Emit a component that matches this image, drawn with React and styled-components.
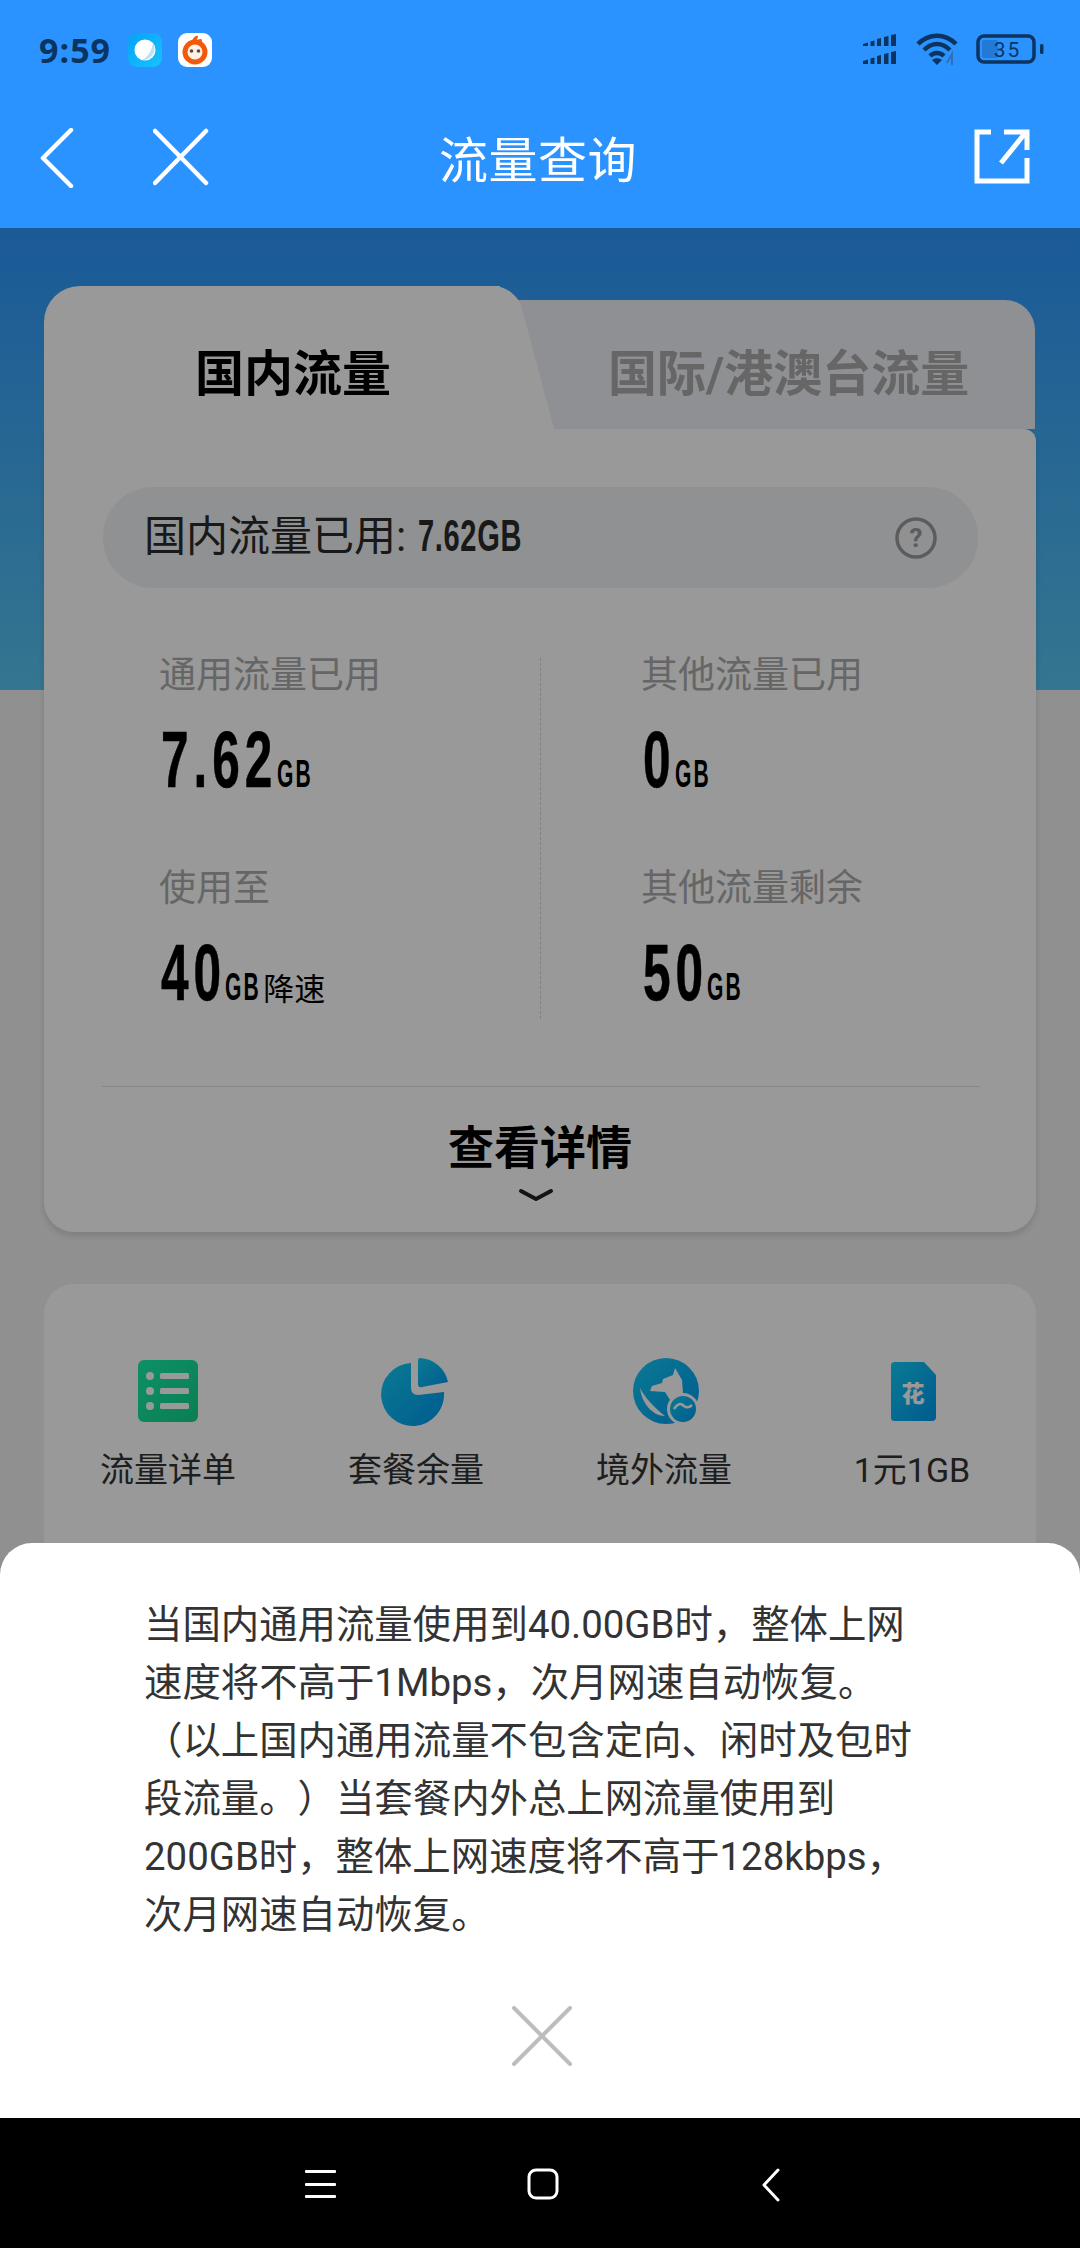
import styled, { createGlobalStyle } from "styled-components";

const GlobalStyle = createGlobalStyle`
    html, body {
        margin: 0;
        padding: 0;
        background: #000;
    }
    * {
        box-sizing: border-box;
    }
`

const cjk = `Roboto, "Noto Sans CJK SC", sans-serif`
const sans = `"Liberation Sans", sans-serif`

const Screen = styled.div`
    width: 1080px;
    height: 2248px;
    display: flex;
    flex-direction: column;
    overflow: hidden;
    font-family: ${cjk};
    text-spacing-trim: space-all;
    background: #000;
`

const TopArea = styled.div`
    height: 228px;
    flex-shrink: 0;
    background: #2b93ff;
    display: flex;
    flex-direction: column;
`

const StatusBar = styled.div`
    height: 100px;
    padding: 33px 36px 0 39px;
    display: flex;
    align-items: flex-start;
    color: #0b3460;
`

const Time = styled.span`
    font-family: "Open Sans", sans-serif;
    font-weight: 700;
    font-size: 34px;
    line-height: 34px;
    letter-spacing: 1px;
    width: 89px;
`

const AppIcon = styled.svg`
    width: 34px;
    height: 34px;
    margin-right: 16px;
`

const StatusRight = styled.div`
    margin-left: auto;
    display: flex;
    gap: 16px;
    align-items: center;
    height: 32px;
`

const NavBar = styled.div`
    flex: 1;
    position: relative;
    display: flex;
    align-items: flex-start;
    padding: 28px 50px 0 40px;
    color: #fff;
`

const NavIcon = styled.svg`
    display: block;
    flex-shrink: 0;
    margin-left: ${({ $left }) => $left || 0}px;
`

const NavTitle = styled.div`
    width: 240px;
    margin-left: 209px;
    margin-right: auto;
    text-align: center;
    font-size: 49px;
    line-height: 56px;
    margin-top: 6px;
    letter-spacing: 0.5px;
`

const Content = styled.div`
    flex: 1;
    position: relative;
    padding: 58px 44px 0;
    background:
        linear-gradient(#2c96fc, #58c4f0) no-repeat 0 0 / 100% 462px,
        #f0f0f0;
`

const Dim = styled.div`
    position: absolute;
    inset: 0;
    z-index: 2;
    background: rgba(0, 0, 0, 0.4);
`

const TabRow = styled.div`
    display: flex;
    align-items: flex-end;
    height: 143px;
`

const ActiveTab = styled.div`
    position: relative;
    width: 456px;
    height: 143px;
    padding: 23px 0 0 151px;
    background: #fff;
    border-radius: 36px 0 0 0;
    display: flex;
    align-items: center;
    font-size: 49px;
    font-weight: 700;
    color: #000;
    z-index: 1;

    &::after {
        content: "";
        position: absolute;
        top: 0;
        bottom: 0;
        right: -35px;
        width: 70px;
        background: #fff;
        border-radius: 0 22px 0 0;
        transform: skewX(14.9deg);
        z-index: -1;
    }
`

const InactiveTab = styled.div`
    flex: 1;
    height: 129px;
    margin-right: 1px;
    padding: 9px 0 0 108px;
    background: #eff1f6;
    border-radius: 0 30px 0 0;
    display: flex;
    align-items: center;
    font-size: 49px;
    font-weight: 700;
    color: #aaa;
    white-space: nowrap;
`

const UsageCard = styled.div`
    height: 803px;
    background: #fff;
    border-radius: 0 12px 30px 30px;
    padding-top: 58px;
    box-shadow: 0 4px 6px rgba(0, 0, 0, 0.12);
`

const UsagePill = styled.div`
    height: 101px;
    margin: 0 58px 0 59px;
    padding: 0 40px 0 41px;
    border-radius: 50px;
    background: #eff2f6;
    display: flex;
    align-items: center;
    justify-content: space-between;
    color: #2a2a2a;
    font-size: 42px;
`

const PillText = styled.span`
    display: flex;
    align-items: baseline;
    margin-top: -11px;
`

// the reference number font is a condensed one, so Liberation Sans gets squeezed
const Squeezed = styled.span`
    display: inline-block;
    flex-shrink: 0;
    white-space: nowrap;
    font-family: ${sans};
    font-weight: 700;
    width: ${({ $w }) => $w}px;
    margin-right: ${({ $w, $s }) => $w * ($s - 1)}px;
    transform: scaleX(${({ $s }) => $s});
    transform-origin: left center;
`

const PillValue = styled(Squeezed)`
    font-size: 44px;
    margin-left: 12px;
    letter-spacing: 1px;
`

const StatGrid = styled.div`
    display: grid;
    grid-template-columns: 381px 1fr;
    margin: 70px 0 0 115px;
    height: 355px;
`

const StatColumn = styled.div`
    display: flex;
    flex-direction: column;
    gap: 65px;

    &:nth-child(2) {
        border-left: 1px dashed #d8d8d8;
        padding-left: 100px;
    }
`

const StatLabel = styled.div`
    font-size: 37px;
    line-height: 36px;
    color: #aaa;
    white-space: nowrap;
`

const StatValue = styled.div`
    display: flex;
    align-items: baseline;
    height: 92px;
    line-height: 92px;
    margin-top: 20px;
    color: #000;
    white-space: nowrap;
`

const BigNumber = styled(Squeezed)`
    font-size: 80px;
    letter-spacing: 8px;
    margin-left: 2px;
    -webkit-text-stroke: 0.6px #000;
`

const Unit = styled(Squeezed)`
    font-size: 39px;
    letter-spacing: 4px;
    margin-left: -1px;
`

const UnitNote = styled.span`
    font-size: 31px;
    margin-left: 2px;
`

const Divider = styled.div`
    height: 1px;
    margin: 73px 56px 0 58px;
    background: #e2e2e2;
`

const DetailLink = styled.div`
    margin-top: 31px;
    display: flex;
    flex-direction: column;
    align-items: center;
    font-size: 46px;
    font-weight: 700;
    line-height: 60px;
    color: #000;
`

const Chevron = styled.svg`
    display: block;
    margin-top: 10px;
    margin-left: -8px;
`

const ToolCard = styled.div`
    margin-top: 52px;
    height: 500px;
    background: #fff;
    border-radius: 30px;
    display: grid;
    grid-template-columns: repeat(4, 1fr);
    padding-top: 72px;
`

const Tool = styled.div`
    display: flex;
    flex-direction: column;
    align-items: center;
`

const ToolIcon = styled.svg`
    display: block;
    width: 70px;
    height: 70px;
`

const ToolLabel = styled.div`
    margin-top: 23px;
    font-size: 34px;
    line-height: 42px;
    color: #333;
`

const Sheet = styled.div`
    position: absolute;
    left: 0;
    right: 0;
    bottom: 0;
    z-index: 3;
    height: 575px;
    background: #fff;
    border-radius: 32px 32px 0 0;
    padding: 53px 100px 0 144px;
    display: flex;
    flex-direction: column;
`

const SheetLine = styled.div`
    font-size: 38.4px;
    line-height: 58px;
    color: #333;
    white-space: nowrap;
`

const SheetClose = styled.svg`
    display: block;
    margin: 62px auto 0 368px;
`

const BottomBar = styled.div`
    height: 130px;
    flex-shrink: 0;
    background: #000;
    display: flex;
    align-items: flex-start;
    padding: 52px 0 0 305px;
`

const BarIcon = styled.svg`
    display: block;
    margin-left: ${({ $left }) => $left || 0}px;
    margin-top: ${({ $top }) => $top || 0}px;
`

const lines = [
    "当国内通用流量使用到40.00GB时，整体上网",
    "速度将不高于1Mbps，次月网速自动恢复。",
    "（以上国内通用流量不包含定向、闲时及包时",
    "段流量。）当套餐内外总上网流量使用到",
    "200GB时，整体上网速度将不高于128kbps，",
    "次月网速自动恢复。",
]

const SignalIcon = () => <svg width="40" height="30" viewBox="0 0 40 30" fill="#0b3460">
    <path d="M0 10 L5 8.5 V12 H0Z M7.5 7.5 L11.5 6.5 V12 H7.5Z M14 5 L18 4 V12 H14Z M21 3 L25.5 2 V12 H21Z M28 1 L33 0 V12 H28Z" transform="translate(3 0)" />
    <path d="M0 27 L5 25.5 V30 H0Z M7.5 24.5 L11.5 23.5 V30 H7.5Z M14 22 L18 21 V30 H14Z M21 20 L25.5 19 V30 H21Z M28 18 L33 17 V30 H28Z" transform="translate(3 0)" />
</svg>

const WifiIcon = () => <svg width="44" height="32" viewBox="0 0 44 32" fill="none" stroke="#0b3460" strokeWidth="4.5">
    <path d="M2 11 C13 0 29 0 40 11" />
    <path d="M8 17 C16 9 26 9 34 17" />
    <path d="M14 23 C18 19 24 19 28 23" />
    <path d="M21 32 L16 27 C19 24.500 23 24.500 26 27Z" fill="#0b3460" stroke="none" />
    <path d="M36 32 V21 L31 30" stroke="#2f6fb4" strokeWidth="2" />
</svg>

const BatteryIcon = () => <svg width="68" height="30" viewBox="0 0 68 30" fill="none">
    <rect x="2" y="2" width="56" height="26" rx="6" stroke="#0b3460" strokeWidth="3.500" />
    <rect x="6" y="6" width="16" height="18" rx="2" fill="#2279d6" />
    <rect x="64" y="10" width="3.500" height="10" rx="1.500" fill="#0b3460" />
    <text x="31.500" y="23" textAnchor="middle" fontFamily="Roboto, sans-serif" fontSize="21" letterSpacing="2" fill="#0b3460">35</text>
</svg>

const tools = [
    {
        label: "流量详单",
        icon: <ToolIcon viewBox="0 0 70 70">
            <defs>
                <linearGradient id="toolGreen" x1="0" y1="0" x2="1" y2="1">
                    <stop offset="0" stopColor="#18f0ac" />
                    <stop offset="1" stopColor="#11d48a" />
                </linearGradient>
            </defs>
            <rect x="5" y="4" width="60" height="62" rx="6" fill="url(#toolGreen)" />
            <g fill="#fff">
                <circle cx="17" cy="20" r="4" />
                <circle cx="17" cy="35" r="4" />
                <circle cx="17" cy="50" r="4" />
                <rect x="27" y="17" width="29" height="6" rx="1.500" />
                <rect x="27" y="32" width="29" height="6" rx="1.500" />
                <rect x="27" y="47" width="29" height="6" rx="1.500" />
            </g>
        </ToolIcon>
    },
    {
        label: "套餐余量",
        icon: <ToolIcon viewBox="0 0 70 70">
            <defs>
                <linearGradient id="toolBlue" x1="0" y1="0" x2="1" y2="1">
                    <stop offset="0" stopColor="#12ccf5" />
                    <stop offset="1" stopColor="#0098f0" />
                </linearGradient>
            </defs>
            <path d="M30 7 V32 Q30 39 37 39 L63 36 A31.500 31.500 0 1 1 30 7Z" fill="url(#toolBlue)" />
            <path d="M37 4 Q37 2 39 2 A30 30 0 0 1 67 26 L41 31 Q37 32 37 28Z" fill="url(#toolBlue)" />
        </ToolIcon>
    },
    {
        label: "境外流量",
        icon: <ToolIcon viewBox="0 0 70 70">
            <circle cx="37" cy="35" r="33" fill="url(#toolBlue)" />
            <path d="M23 30 L33 27 L34 23 L44 19 L46 12 L53 24 L54 37 L41 44 L36 36 L21 35Z" fill="#fff" />
            <path d="M11 32 C16 42 26 52 36 60 C24 60 13 48 11 32Z" fill="#fff" />
            <circle cx="54" cy="53" r="16" fill="#fff" />
            <circle cx="54" cy="53" r="13" fill="url(#toolBlue)" />
            <path d="M45 53 Q50 45 55 50 Q59 53 63 49" fill="none" stroke="#fff" strokeWidth="2.500" />
        </ToolIcon>
    },
    {
        label: "1元1GB",
        icon: <ToolIcon viewBox="0 0 70 70">
            <path d="M18 6 H47 L59 19 V61 C59 64 57 65 55 65 H18 C15 65 14 64 14 61 V10 C14 7 15 6 18 6Z" fill="url(#toolBlue)" />
            <text x="36" y="46" textAnchor="middle" fontFamily="Noto Sans CJK SC, sans-serif" fontWeight="900" fontSize="23" fill="#fff">花</text>
        </ToolIcon>
    },
]

const App = () => {
    return(
        <Screen>
            <GlobalStyle />
            <TopArea>
                <StatusBar>
                    <Time>9:59</Time>
                    <AppIcon viewBox="0 0 34 34">
                        <defs>
                            <linearGradient id="appBlue" x1="0" y1="0" x2="1" y2="1">
                                <stop offset="0" stopColor="#0aa0f8" />
                                <stop offset="1" stopColor="#16c4ff" />
                            </linearGradient>
                        </defs>
                        <rect width="34" height="34" rx="9" fill="url(#appBlue)" />
                        <circle cx="17" cy="17" r="10.500" fill="#fff" />
                        <path d="M25 10 C29 17 25 25 17 27 L14 27 C20 24 24 17 25 10Z" fill="#bfe0f5" />
                    </AppIcon>
                    <AppIcon viewBox="0 0 34 34">
                        <rect width="34" height="34" rx="9" fill="#fff" />
                        <circle cx="17" cy="19" r="10" fill="#fbf2ea" stroke="#f05a0a" strokeWidth="5" />
                        <path d="M14 10 C14 5 18 2 20 3 C20 5 19 6 18 8 C20 6 23 5 24 7 C24 9 21 11 19 11Z" fill="#f05a0a" />
                        <circle cx="13.500" cy="18" r="1.800" fill="#6a4030" />
                        <circle cx="20.500" cy="18" r="1.800" fill="#6a4030" />
                    </AppIcon>
                    <StatusRight>
                        <SignalIcon />
                        <WifiIcon />
                        <BatteryIcon />
                    </StatusRight>
                </StatusBar>
                <NavBar>
                    <NavIcon width="34" height="60" viewBox="0 0 34 60" fill="none" stroke="#fff" strokeWidth="4.5" strokeLinecap="round" strokeLinejoin="round">
                        <path d="M31 2 L3 30 L31 58" />
                    </NavIcon>
                    <NavIcon $left={79} width="56" height="58" viewBox="0 0 56 58" fill="none" stroke="#fff" strokeWidth="4.5" strokeLinecap="round">
                        <path d="M2 3 L53 55 M53 3 L2 55" />
                    </NavIcon>
                    <NavTitle>流量查询</NavTitle>
                    <NavIcon width="56" height="56" viewBox="0 0 56 56" fill="none" stroke="#fff" strokeWidth="5">
                        <path d="M17 4 H3 V53 H53 V30" />
                        <path d="M30 4 H53 V22 M52 4 L27 35" />
                    </NavIcon>
                </NavBar>
            </TopArea>
            <Content>
                <TabRow>
                    <ActiveTab>国内流量</ActiveTab>
                    <InactiveTab>国际/港澳台流量</InactiveTab>
                </TabRow>
                <UsageCard>
                    <UsagePill>
                        <PillText>国内流量已用:<PillValue $w={158} $s={0.66}>7.62GB</PillValue></PillText>
                        <svg width="44" height="44" viewBox="0 0 44 44" fill="none">
                            <circle cx="22" cy="22" r="19" stroke="#999" strokeWidth="3.500" />
                            <text x="22" y="31" textAnchor="middle" fontFamily="Roboto, sans-serif" fontWeight="700" fontSize="26" fill="#999">?</text>
                        </svg>
                    </UsagePill>
                    <StatGrid>
                        <StatColumn>
                            <div>
                                <StatLabel>通用流量已用</StatLabel>
                                <StatValue><BigNumber $w={188} $s={0.62}>7.62</BigNumber><Unit $w={67} $s={0.54}>GB</Unit></StatValue>
                            </div>
                            <div>
                                <StatLabel>使用至</StatLabel>
                                <StatValue><BigNumber $w={105} $s={0.62}>40</BigNumber><Unit $w={67} $s={0.54}>GB</Unit><UnitNote>降速</UnitNote></StatValue>
                            </div>
                        </StatColumn>
                        <StatColumn>
                            <div>
                                <StatLabel>其他流量已用</StatLabel>
                                <StatValue><BigNumber $w={53} $s={0.62}>0</BigNumber><Unit $w={67} $s={0.54}>GB</Unit></StatValue>
                            </div>
                            <div>
                                <StatLabel>其他流量剩余</StatLabel>
                                <StatValue><BigNumber $w={105} $s={0.62}>50</BigNumber><Unit $w={67} $s={0.54}>GB</Unit></StatValue>
                            </div>
                        </StatColumn>
                    </StatGrid>
                    <Divider />
                    <DetailLink>
                        查看详情
                        <Chevron width="36" height="14" viewBox="0 0 36 14" fill="none" stroke="#222" strokeWidth="4" strokeLinecap="round" strokeLinejoin="round">
                            <path d="M3 3 L18 11 L33 3" />
                        </Chevron>
                    </DetailLink>
                </UsageCard>
                <ToolCard>
                    {tools.map((tool) => <Tool key={tool.label}>
                        {tool.icon}
                        <ToolLabel>{tool.label}</ToolLabel>
                    </Tool>)}
                </ToolCard>
                <Dim />
                <Sheet>
                    {lines.map((line) => <SheetLine key={line}>{line}</SheetLine>)}
                    <SheetClose width="60" height="60" viewBox="0 0 60 60" fill="none" stroke="#bdbdbd" strokeWidth="4" strokeLinecap="round">
                        <path d="M2 2 L58 58 M58 2 L2 58" />
                    </SheetClose>
                </Sheet>
            </Content>
            <BottomBar>
                <BarIcon width="32" height="28" viewBox="0 0 32 28" fill="#fff">
                    <rect y="0" width="31" height="3" rx="1" />
                    <rect y="13" width="31" height="3" rx="1" />
                    <rect y="25" width="31" height="3" rx="1" />
                </BarIcon>
                <BarIcon $left={190} $top={-2} width="32" height="32" viewBox="0 0 32 32" fill="none" stroke="#fff" strokeWidth="3">
                    <rect x="2" y="2" width="28" height="28" rx="7" />
                </BarIcon>
                <BarIcon $left={203} $top={-2} width="18" height="34" viewBox="0 0 18 34" fill="none" stroke="#fff" strokeWidth="3" strokeLinecap="round" strokeLinejoin="round">
                    <path d="M16 2 L2 17 L16 32" />
                </BarIcon>
            </BottomBar>
        </Screen>
    )
}

export default App
